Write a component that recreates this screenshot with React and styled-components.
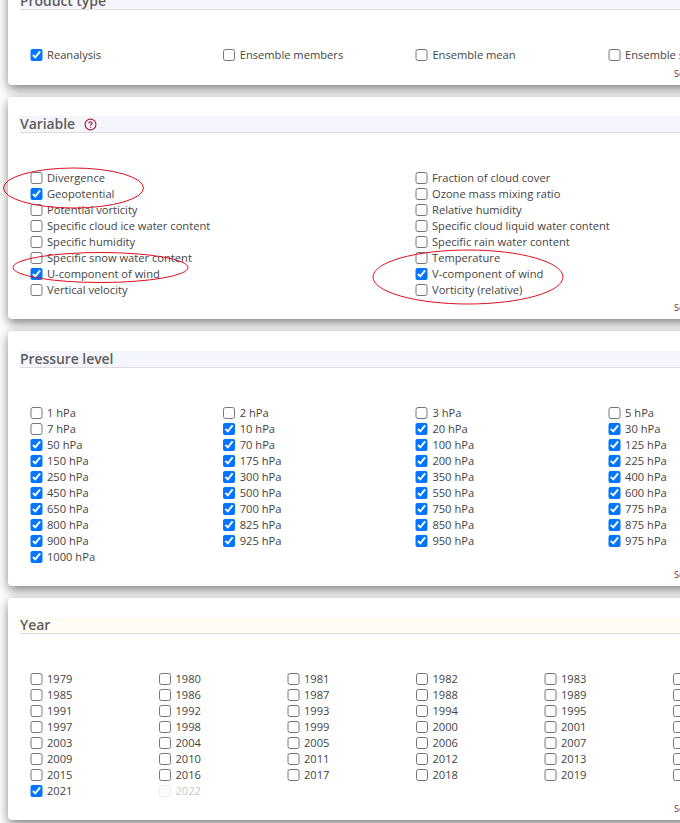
import styled, { createGlobalStyle } from "styled-components";
import { CircleHelp } from "lucide-react";

const GlobalStyle = createGlobalStyle`
  html, body {
    margin: 0;
    padding: 0;
    width: 680px;
    height: 823px;
    overflow: hidden;
    background: #fff;
  }
  body {
    font-family: "Open Sans", "Liberation Sans", sans-serif;
  }
`;

const Page = styled.div`
  position: relative;
  width: 680px;
  height: 823px;
  overflow: hidden;
`;

const Stack = styled.div`
  display: flex;
  flex-direction: column;
  gap: 12px;
  width: 816px;
  margin: -26px 0 0 8px;
`;

const Card = styled.section`
  background: #fff;
  border-radius: 4px;
  box-shadow: 0 4px 11px rgba(0, 0, 0, 0.5);
  padding: ${({ $top }) => $top || 19}px 12px 0;
  height: ${({ $height }) => $height}px;
  box-sizing: border-box;
  position: relative;
`;

const Title = styled.h3`
  display: flex;
  align-items: center;
  gap: 9px;
  height: 16px;
  margin: 0;
  font-size: 14px;
  line-height: 16px;
  font-weight: 600;
  color: #5e5e5e;
  background: ${({ $tint }) => $tint || "#f5f6fd"};
  border-bottom: 1px solid #dcdcdc;
  box-sizing: content-box;
  span {
    letter-spacing: -0.07px;
  }
`;

const Help = styled(CircleHelp)`
  color: #a3243b;
  flex: none;
`;

const Options = styled.div`
  display: grid;
  grid-template-columns: repeat(${({ $cols }) => $cols}, ${({ $width }) => $width}px);
  grid-auto-rows: 16px;
  grid-auto-flow: ${({ $flow }) => $flow || "row"};
  ${({ $flow, $rows }) => ($flow === "column" ? `grid-template-rows: repeat(${$rows}, 16px);` : "")}
  margin: 37px 0 0 10px;
`;

const Option = styled.label`
  display: flex;
  align-items: center;
  gap: 4.5px;
  font-size: 11.15px;
  line-height: 16px;
  color: ${({ $disabled }) => ($disabled ? "#c9c9c9" : "#444")};
  white-space: nowrap;
`;

const Check = styled.input.attrs({ type: "checkbox" })`
  width: 12.5px;
  height: 12.5px;
  margin: 0;
  flex: none;
  opacity: ${({ disabled }) => (disabled ? 0.35 : 1)};
`;

const SelectAll = styled.span`
  position: absolute;
  left: 666px;
  bottom: 5px;
  font-size: 9px;
  line-height: 12px;
  color: #7a2a35;
  white-space: nowrap;
`;

const Annotations = styled.svg`
  position: absolute;
  top: 0;
  left: 0;
  pointer-events: none;
`;

const variables = [
  ["Divergence", false],
  ["Geopotential", true],
  ["Potential vorticity", false],
  ["Specific cloud ice water content", false],
  ["Specific humidity", false],
  ["Specific snow water content", false],
  ["U-component of wind", true],
  ["Vertical velocity", false],
  ["Fraction of cloud cover", false],
  ["Ozone mass mixing ratio", false],
  ["Relative humidity", false],
  ["Specific cloud liquid water content", false],
  ["Specific rain water content", false],
  ["Temperature", false],
  ["V-component of wind", true],
  ["Vorticity (relative)", false],
];

const products = ["Reanalysis", "Ensemble members", "Ensemble mean", "Ensemble spread"];

const levels = [1, 2, 3, 5, 7, 10, 20, 30, 50, 70, 100, 125, 150, 175, 200, 225, 250, 300, 350, 400, 450, 500, 550, 600, 650, 700, 750, 775, 800, 825, 850, 875, 900, 925, 950, 975, 1000];
const uncheckedLevels = [1, 2, 3, 5, 7];

const years = Array.from({ length: 44 }, (_, i) => 1979 + i);

function Field({ label, checked, disabled }) {
  return (
    <Option $disabled={disabled}>
      <Check defaultChecked={checked} disabled={disabled} />
      {label}
    </Option>
  );
}

export default function App() {
  return (
    <Page>
      <GlobalStyle />
      <Stack>
        <Card $height={111}>
          <Title>
            <span>Product type</span>
          </Title>
          <Options $cols={4} $width={192.7}>
            {products.map((p, i) => (
              <Field key={p} label={p} checked={i === 0} />
            ))}
          </Options>
          <SelectAll>Select all</SelectAll>
        </Card>

        <Card $height={222}>
          <Title>
            <span>Variable</span> <Help size={13} strokeWidth={2.2} />
          </Title>
          <Options $cols={2} $width={385} $flow="column" $rows={8}>
            {variables.map(([label, checked]) => (
              <Field key={label} label={label} checked={checked} />
            ))}
          </Options>
          <SelectAll>Select all</SelectAll>
        </Card>

        <Card $height={255} $top={20}>
          <Title>
            <span>Pressure level</span>
          </Title>
          <Options $cols={4} $width={192.7}>
            {levels.map((l) => (
              <Field key={l} label={`${l} hPa`} checked={!uncheckedLevels.includes(l)} />
            ))}
          </Options>
          <SelectAll>Select all</SelectAll>
        </Card>

        <Card $height={222}>
          <Title $tint="#fffdf3">
            <span>Year</span>
          </Title>
          <Options $cols={6} $width={128.5}>
            {years.map((y) => (
              <Field key={y} label={y} checked={y === 2021} disabled={y === 2022} />
            ))}
          </Options>
          <SelectAll>Select all</SelectAll>
        </Card>
      </Stack>

      {/* hand drawn red marks over the selected variables */}
      <Annotations width="680" height="823" fill="none" stroke="#e0101e" strokeWidth="1">
        <ellipse cx="73.5" cy="188" rx="70" ry="20" />
        <ellipse cx="100.5" cy="267.5" rx="87.5" ry="15" />
        <ellipse cx="468" cy="277" rx="95" ry="27" />
      </Annotations>
    </Page>
  );
}
